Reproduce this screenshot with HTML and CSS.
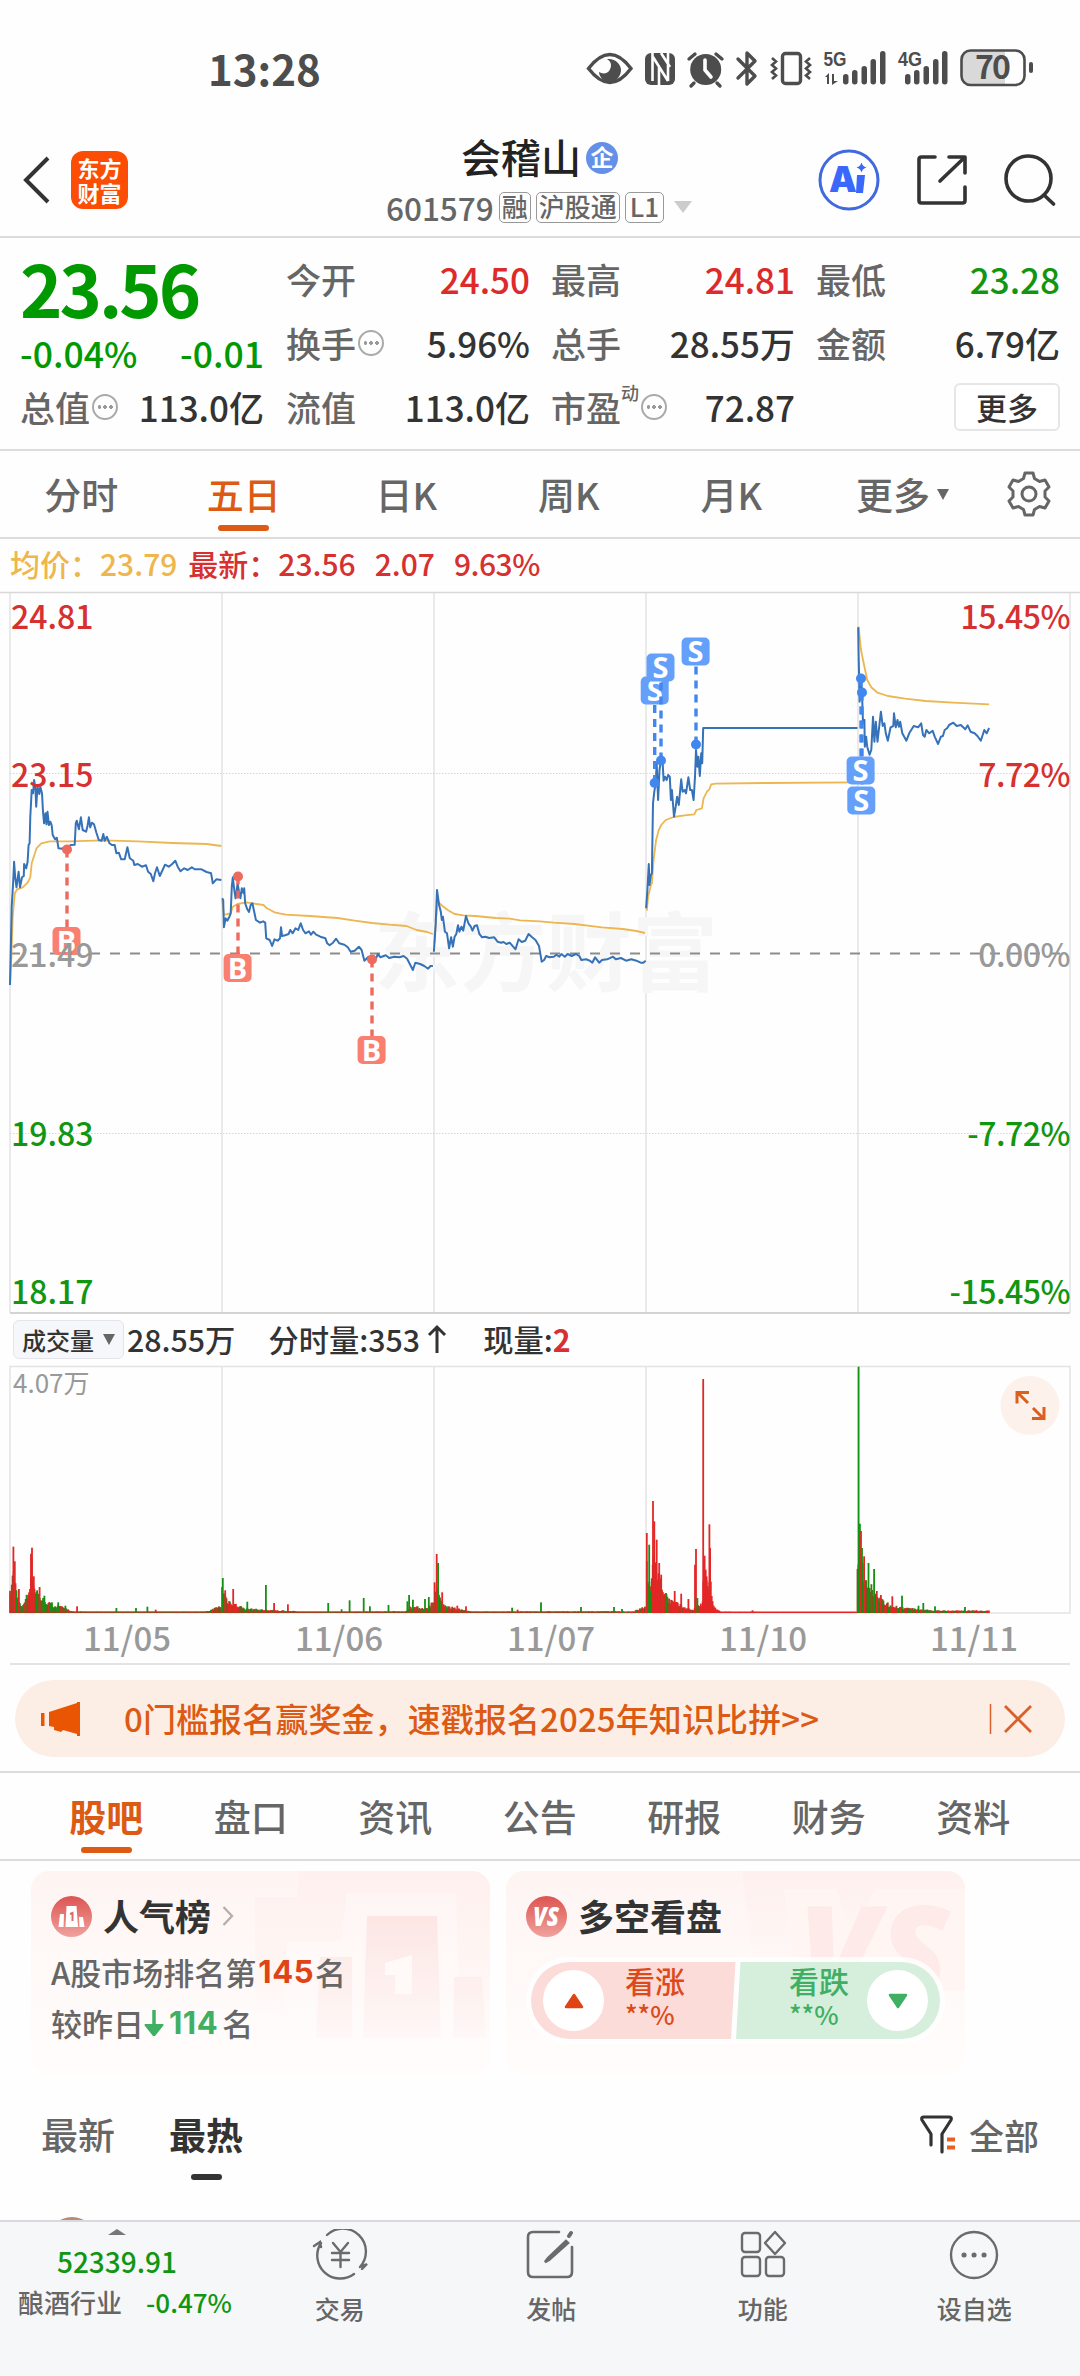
FILE: index.html
```html
<!DOCTYPE html>
<html lang="zh-CN">
<head>
    <meta charset="UTF-8">
    <meta name="viewport" content="width=device-width, initial-scale=1.0">
    <title>会稽山 601579</title>
    <link rel="stylesheet" href="styles.css">
</head>
<body>

<div class="page">
    <div class="status">
        <span class="clock">13:28</span>
        <svg class="status-icons" width="450" height="40" viewBox="585 50 450 40">
            <g fill="none" stroke="#4d4d4d" stroke-width="3.4">
                <path d="M588.500 69.500Q610 41.500 631 69.500Q610 97.500 588.500 69.500Z"/>
                <path d="M689 60l6-5M722 60l-6-5M694 84l-3 3M717 84l3 3" stroke-linecap="round"/>
                <path d="M738 60l17 17-8 8V54l8 8-17 17" stroke-linejoin="round" stroke-linecap="round"/>
                <rect x="782.500" y="54.500" width="18" height="30" rx="3"/>
                <path d="M772 59l4 3.500-4 3.500 4 3.500-4 3.500 4 3.500-4 3.500M810 59l-4 3.500 4 3.500-4 3.500 4 3.500-4 3.500 4 3.500" stroke-width="2.600"/>
            </g>
            <g fill="#4d4d4d">
                <path d="M607 60c8-1 14 5 14 11s-5 12-11 12-11-5-11-10c3 2 8 2 10-1 3-4 3-9-2-12z"/>
                <rect x="645" y="54" width="30" height="32" rx="6"/>
                <circle cx="705.700" cy="70.500" r="15.500"/>
                <rect x="843" y="75" width="5.500" height="10.500" rx="2.700"/>
                <rect x="852" y="71" width="5.500" height="14.500" rx="2.700"/>
                <rect x="861.500" y="67" width="5.500" height="18.500" rx="2.700"/>
                <rect x="870.500" y="60" width="5.500" height="25.500" rx="2.700"/>
                <rect x="880" y="52" width="5.500" height="33.500" rx="2.700"/>
                <rect x="905" y="75" width="5.500" height="10.500" rx="2.700"/>
                <rect x="914" y="71" width="5.500" height="14.500" rx="2.700"/>
                <rect x="923.500" y="67" width="5.500" height="18.500" rx="2.700"/>
                <rect x="933" y="60" width="5.500" height="25.500" rx="2.700"/>
                <rect x="942" y="52" width="5.500" height="33.500" rx="2.700"/>
                <path d="M825 78l4-4v11h-2v-7zM832 75h2v7h4l-6 4z"/>
                <text class="net" x="823.500" y="67" textLength="23" lengthAdjust="spacingAndGlyphs">5G</text>
                <text class="net" x="898" y="67" textLength="24" lengthAdjust="spacingAndGlyphs">4G</text>
                <rect x="1029" y="63" width="4" height="11" rx="2"/>
            </g>
            <path d="M652.500 54v28M653 58l15 24M659 67v19M661 54l9 14M668 54v28" fill="none" stroke="#fff" stroke-width="2.600"/>
            <path d="M705 61v10l6 7" fill="none" stroke="#fff" stroke-width="3.600" stroke-linecap="round"/>
            <path d="M970 51.500h35v34.500h-35a9 9 0 0 1-9-9v-16.500a9 9 0 0 1 9-9z" fill="#d9d9d9"/>
            <rect x="961.500" y="51.500" width="63" height="34.500" rx="9" fill="none" stroke="#4d4d4d" stroke-width="2.600"/>
            <text class="charge" x="975" y="80" textLength="36">70</text>
        </svg>
    </div>

    <div class="topbar">
        <svg class="back" width="30" height="50" viewBox="0 0 30 50"><path d="M26 3L4 25l22 22" fill="none" stroke="#333" stroke-width="4"/></svg>
        <div class="logo">东方<br>财富</div>
        <div class="stock">
            <div class="stock-name">会稽山<span class="ent">企</span></div>
            <div class="stock-code">601579<span class="tag">融</span><span class="tag">沪股通</span><span class="tag">L1</span><i class="tri"></i></div>
        </div>
        <div class="actions">
            <svg width="62" height="62" viewBox="0 0 62 62">
                <circle cx="31" cy="31" r="29" fill="none" stroke="#4069e0" stroke-width="3"/>
                <text class="ai" x="11" y="43">A</text>
                <path d="M39 26h8l-2 18h-7z" fill="#3a68fa"/>
                <path d="M43.500 13.500q1 4 5 5-4 1-5 5-1-4-5-5 4-1 5-5z" fill="#3a68fa"/>
            </svg>
            <svg width="50" height="50" viewBox="0 0 50 50" fill="none" stroke="#333" stroke-width="3.600" stroke-linecap="round" stroke-linejoin="round">
                <path d="M18 2H4.500Q2 2 2 4.500v41Q2 48 4.500 48h41q2.500 0 2.500-2.500V32M32 2h16v16M47 3L23 26"/>
            </svg>
            <svg width="52" height="52" viewBox="0 0 52 52" fill="none" stroke="#333" stroke-width="3.600" stroke-linecap="round">
                <circle cx="24.500" cy="24.500" r="22.500"/>
                <path d="M40 41l9.500 9"/>
            </svg>
        </div>
    </div>

    <div class="quote">
        <div class="quote-main">
            <div class="price">23.56</div>
            <div class="change"><span>-0.04%</span><span>-0.01</span></div>
            <div class="cell"><label>总值<i class="more-dot"></i></label><b>113.0亿</b></div>
        </div>
        <div class="quote-grid">
            <div class="cell"><label>今开</label><b class="up">24.50</b></div>
            <div class="cell"><label>最高</label><b class="up">24.81</b></div>
            <div class="cell"><label>最低</label><b class="down">23.28</b></div>
            <div class="cell"><label>换手<i class="more-dot"></i></label><b>5.96%</b></div>
            <div class="cell"><label>总手</label><b>28.55万</b></div>
            <div class="cell"><label>金额</label><b>6.79亿</b></div>
            <div class="cell"><label>流值</label><b>113.0亿</b></div>
            <div class="cell"><label>市盈<sup>动</sup><i class="more-dot"></i></label><b>72.87</b></div>
            <div class="cell end"><button class="more-btn">更多</button></div>
        </div>
    </div>

    <div class="tabs">
        <span>分时</span>
        <span class="on">五日</span>
        <span>日K</span>
        <span>周K</span>
        <span>月K</span>
        <span class="wide">更多<i class="tri-s"></i></span>
        <svg width="46" height="46" viewBox="0 0 46 46" fill="none" stroke="#666" stroke-width="3" stroke-linejoin="round">
            <path d="M19 2h8l1.500 5.500 5 3 5.500-1.500 4 7-4 4v6l4 4-4 7-5.500-1.500-5 3L27 44h-8l-1.500-5.500-5-3L7 37l-4-7 4-4v-6l-4-4 4-7 5.500 1.500 5-3z"/>
            <circle cx="23" cy="23" r="7"/>
        </svg>
    </div>

    <div class="legend">
        <span class="avg">均价：</span><span class="avg v1">23.79</span>
        <span>最新：</span><span class="v2">23.56</span><span class="v3">2.07</span><span class="v4">9.63%</span>
    </div>

    <svg class="chart" width="1080" height="724" viewBox="0 0 1080 724">
        <g stroke="#e3e3e3" stroke-width="1.500">
            <path d="M10 2.500V723M222 3V723M434 3V723M646 3V723M858 3V723M1070 2.500V723"/>
            <path d="M0 2.500H1080" stroke="#d8d8d8"/>
            <path d="M10 723H1070" stroke="#d4d4d4" stroke-width="2"/>
            <path d="M10 183.500H1070M10 543.500H1070" stroke="#d6d6d6" stroke-width="1" stroke-dasharray="1.500 1.500"/>
        </g>
        <text class="watermark" x="374" y="395">东方财富</text>
        <path d="M10 363.500H1070" stroke="#8c8c8c" stroke-width="2" stroke-dasharray="10 10"/>
        <g id="lines"></g>
        <g id="marks"></g>
        <g class="axis">
            <text class="t-up" x="11" y="39">24.81</text>
            <text class="t-up" x="11" y="197">23.15</text>
            <text class="t-flat" x="11" y="377">21.49</text>
            <text class="t-down" x="11" y="556">19.83</text>
            <text class="t-down" x="11" y="714">18.17</text>
        </g>
        <g class="axis right">
            <text class="t-up" x="1070" y="39">15.45%</text>
            <text class="t-up" x="1070" y="197">7.72%</text>
            <text class="t-flat" x="1070" y="377">0.00%</text>
            <text class="t-down" x="1070" y="556">-7.72%</text>
            <text class="t-down" x="1070" y="714">-15.45%</text>
        </g>
    </svg>

    <div class="vol-head">
        <span class="vol-select">成交量<i class="tri-s"></i></span>
        <span class="n1">28.55万</span>
        <span class="n2">分时量:353<svg width="20" height="30" viewBox="0 0 20 30"><path d="M10 29V3M2 11l8-8 8 8" fill="none" stroke="#333" stroke-width="3"/></svg></span>
        <span>现量:<em>2</em></span>
    </div>

    <svg class="chart" width="1080" height="306" viewBox="0 0 1080 306">
        <g stroke="#e3e3e3" stroke-width="1.500">
            <path d="M10 2.500H1070V249H10ZM222 3V249M434 3V249M646 3V249M858 3V249" fill="none"/>
            <path d="M10 300H1070" stroke-width="2"/>
        </g>
        <g id="volume"></g>
        <text class="vol-max" x="13" y="29">4.07万</text>
        <g class="dates">
            <text x="127" y="287">11/05</text>
            <text x="339" y="287">11/06</text>
            <text x="551" y="287">11/07</text>
            <text x="763" y="287">11/10</text>
            <text x="974" y="287">11/11</text>
        </g>
        <circle cx="1030" cy="41.500" r="29.500" fill="#fdf1eb"/>
        <path d="M1017 39.500V28.500h12M1018 29l10 10M1044 43v11.500h-12M1043 54l-10-10" fill="none" stroke="#dc5f1c" stroke-width="3"/>
    </svg>

    <div class="banner">
        <svg width="40" height="34" viewBox="0 0 40 34" fill="#ea5504"><path d="M0 11h3.500v13H0zM8 10L36 1V0h3v34h-3v-2l-14-4-2 2-7-2v-3l-5-1z"/></svg>
        <p>0门槛报名赢奖金，速戳报名2025年知识比拼&gt;&gt;</p>
        <svg class="close" width="44" height="32" viewBox="0 0 44 32" fill="none" stroke="#d9602a"><path d="M1.500 1v30" stroke-width="1.500"/><path d="M16 3l26 26M42 3L16 29" stroke-width="2.800"/></svg>
    </div>

    <div class="tabs tabs2">
        <span class="on">股吧</span>
        <span>盘口</span>
        <span>资讯</span>
        <span>公告</span>
        <span>研报</span>
        <span>财务</span>
        <span>资料</span>
    </div>

    <div class="cards">
        <div class="card">
            <svg class="card-bg" width="459" height="204" viewBox="0 0 459 204">
                <defs>
                    <linearGradient id="fade" x1="0" y1="0" x2="0" y2="1"><stop offset="0" stop-color="#fce6e4"/><stop offset="1" stop-color="#fef8f6"/></linearGradient>
                    <linearGradient id="pale" x1="0" y1="0" x2="0" y2="1"><stop offset="0" stop-color="#fef0ee"/><stop offset="1" stop-color="#fffaf8"/></linearGradient>
                    <linearGradient id="ball" x1="0" y1="0" x2="0" y2="1"><stop offset="0" stop-color="#dc5450"/><stop offset="1" stop-color="#f0a29e"/></linearGradient>
                </defs>
                <path d="M268 0H459V160H429L425 22H315L311 70H256L252 140H224V26H266Z" fill="url(#pale)"/>
                <path d="M289 86h32v81h-36zM336 45h70l4 122h-78zM423 106h28l4 61h-33z" fill="url(#fade)"/>
                <path d="M354 92l27-8v39h-17v-19h-10z" fill="#fffaf8"/>
            </svg>
            <h3>
                <svg width="41" height="41" viewBox="0 0 41 41"><circle cx="20.500" cy="20.500" r="20.500" fill="url(#ball)"/><path d="M9 18h4l-.5 13H7.500zM15.500 10h10l1.500 21H14.500zM28 21h4l1.500 10H28.500z" fill="#fff"/><path d="M19 18l2.500-1v8" fill="none" stroke="#dc6a66" stroke-width="2"/></svg>
                <span>人气榜</span>
                <svg class="arrow" width="12" height="20" viewBox="0 0 12 20"><path d="M1.500 1l8.500 9-8.500 9" fill="none" stroke="#b5b0b0" stroke-width="2.400"/></svg>
            </h3>
            <p>A股市场排名第<b class="hot">145</b>名</p>
            <p>较昨日<svg class="fall" width="20" height="28" viewBox="0 0 20 28"><path d="M10 1v18" stroke="#3faf63" stroke-width="3.500"/><path d="M1 15h18q1 1 0 2l-8 10h-2L1 17q-1-1 0-2z" fill="#3faf63"/></svg><b class="cool">114</b>名</p>
        </div>
        <div class="card">
            <svg class="card-bg" width="459" height="204" viewBox="0 0 459 204">
                <path d="M236 0H459V110H250Z" fill="url(#pale)"/>
                <path d="M278 18H330L345 60 370 18H459V120H290Z" fill="#fff6f3"/>
                <text class="vs-big" x="292" y="128">VS</text>
            </svg>
            <h3>
                <svg width="41" height="41" viewBox="0 0 41 41"><circle cx="20.500" cy="20.500" r="20.500" fill="url(#ball)"/><text class="vs" x="7" y="30" textLength="26" lengthAdjust="spacingAndGlyphs">VS</text></svg>
                <span>多空看盘</span>
            </h3>
            <div class="vote">
                <svg class="vote-bg" width="419" height="87" viewBox="0 0 419 87">
                    <rect width="419" height="87" rx="43.500" fill="#fff" opacity=".8"/>
                    <path d="M43.500 5H209.500L205 82H43.500a38.500 38.500 0 0 1 0-77z" fill="#fcdcd9"/>
                    <path d="M214.500 5H375.500a38.500 38.500 0 0 1 0 77H210z" fill="#d6eedc"/>
                </svg>
                <i class="knob"><svg width="20" height="16" viewBox="0 0 20 16"><path d="M10 2l8 12H2z" fill="#e04314" stroke="#e04314" stroke-width="2.500" stroke-linejoin="round"/></svg></i>
                <div class="side rise">看涨<small>**%</small></div>
                <div class="side drop">看跌<small>**%</small></div>
                <i class="knob"><svg width="20" height="16" viewBox="0 0 20 16"><path d="M10 14l8-12H2z" fill="#3faf63" stroke="#3faf63" stroke-width="2.500" stroke-linejoin="round"/></svg></i>
            </div>
        </div>
    </div>

    <div class="sort">
        <span>最新</span>
        <span class="on">最热</span>
        <div class="filter">
            <svg width="38" height="40" viewBox="0 0 38 40" fill="none" stroke="#333" stroke-width="3.200" stroke-linecap="round" stroke-linejoin="round">
                <path d="M11 30V19L2 5q-1-3 2-3h25q3 0 2 3l-9 14v18"/>
                <path d="M27 24.500h8M27 32.500h8" stroke="#ea6020" stroke-width="4" stroke-linecap="butt"/>
            </svg>
            全部
        </div>
    </div>
    <div class="feed"><i class="avatar"></i></div>

    <div class="dock">
        <div class="index">
            <i class="tri-up"></i>
            <b>52339.91</b>
            <div>酿酒行业<em>-0.47%</em></div>
        </div>
        <div class="item">
            <svg width="56" height="52" viewBox="0 0 56 52" fill="none" stroke="#6b6b6b" stroke-width="2.400" stroke-linecap="round">
                <path d="M15 6a23 23 0 0 1 33 32M42 45A23 23 0 0 1 9 14M2 17l6-4 1 5M48 38l7-3-5 5"/>
                <path d="M21 14l7.500 9 7.500-9M28.500 23v15M20 24h17M20 31h17"/>
            </svg>
            交易
        </div>
        <div class="item">
            <svg width="56" height="52" viewBox="0 0 56 52" fill="none" stroke="#6b6b6b" stroke-width="2.600" stroke-linecap="round">
                <path d="M36 3H10Q5 3 5 8v35q0 5 5 5h34q5 0 5-5V18"/>
                <path d="M43 12L25 29l-3 4 4-2 19-17z" fill="#6b6b6b"/>
                <path d="M46 7l2-3" stroke-width="4"/>
            </svg>
            发帖
        </div>
        <div class="item">
            <svg width="56" height="52" viewBox="0 0 56 52" fill="none" stroke="#6b6b6b" stroke-width="2.400" stroke-linejoin="round">
                <rect x="7" y="4" width="18" height="19" rx="3"/>
                <rect x="7" y="28" width="18" height="19" rx="3"/>
                <rect x="31" y="28" width="18" height="19" rx="3"/>
                <path d="M40 3l10 11-10 11-10-11z"/>
            </svg>
            功能
        </div>
        <div class="item">
            <svg width="56" height="52" viewBox="0 0 56 52" fill="none" stroke="#6b6b6b" stroke-width="2.400">
                <circle cx="28" cy="26" r="23"/>
                <path d="M18 26h.1M28 26h.1M38 26h.1" stroke-width="5" stroke-linecap="round"/>
            </svg>
            设自选
        </div>
    </div>
</div>

<script src="chart.js"></script>
</body>
</html>
```
FILE: styles.css
```css
body {
    margin: 0;
    background: #fefefe;
    color: #333;
    font-family: "Noto Sans CJK SC", sans-serif;
    font-weight: 500;
}
.page {
    width: 1080px;
    height: 2376px;
    overflow: hidden;
    display: flex;
    flex-direction: column;
}
.page > * {
    flex: none;
    box-sizing: border-box;
}
svg {
    flex: none;
    display: block;
}
i, em {
    font-style: normal;
}
p, h3 {
    margin: 0;
}

/* status bar */
.status {
    height: 100px;
    padding: 38px 45px 0 208px;
    display: flex;
    justify-content: space-between;
    align-items: center;
    color: #4d4d4d;
}
.clock {
    font-size: 42px;
    font-weight: 700;
    line-height: 62px;
    margin-top: -2px;
}
.net {
    font-family: "Liberation Sans", sans-serif;
    font-size: 20px;
    font-weight: 700;
}
.charge {
    font-size: 32px;
    font-weight: 700;
    fill: #4d4d4d;
}

/* title bar */
.topbar {
    height: 138px;
    padding: 0 24px 0 22px;
    border-bottom: 2px solid #dcdcdc;
    display: flex;
    align-items: center;
}
.back {
    margin: 24px 19px 0 0;
}
.logo {
    width: 57px;
    height: 58px;
    margin-top: 24px;
    padding-top: 4px;
    box-sizing: border-box;
    border-radius: 12px;
    background: #fd4d05;
    color: #fff;
    font-size: 22px;
    line-height: 25px;
    font-weight: 700;
    text-align: center;
}
.stock {
    margin: 24px auto 0 258px;
}
.stock-name {
    display: flex;
    align-items: center;
    margin-left: 75px;
    font-size: 40px;
    line-height: 54px;
    color: #222;
}
.ent {
    width: 32px;
    height: 32px;
    margin: 3px 0 0 5px;
    border-radius: 50%;
    background: #6490e8;
    color: #fff;
    font-size: 23px;
    line-height: 29px;
    font-weight: 700;
    text-align: center;
}
.stock-code {
    display: flex;
    align-items: center;
    height: 48px;
    font-size: 31.500px;
    line-height: 46px;
    color: #666;
}
.tag {
    height: 31px;
    margin-left: 5px;
    padding: 0 2px;
    box-sizing: border-box;
    border: 1.5px solid #999;
    border-radius: 5px;
    font-size: 26px;
    line-height: 25px;
}
.tag:last-of-type {
    padding: 0 4px;
}
.tri {
    margin-left: 10px;
    border: 9px solid transparent;
    border-top: 12px solid #ccc;
    border-bottom: 0;
}
.actions {
    display: flex;
    align-items: center;
    gap: 37px;
    margin-top: 24px;
}
.ai {
    font-family: Inter, sans-serif;
    font-size: 35px;
    font-weight: 900;
    fill: #3a68fa;
}

/* quote */
.quote {
    height: 213px;
    padding: 9px 19px 0 20px;
    border-bottom: 2px solid #dcdcdc;
    display: flex;
}
.quote-main {
    width: 244px;
    margin-right: 22px;
    color: #009900;
}
.price {
    height: 84px;
    font-size: 72px;
    line-height: 79px;
    font-weight: 700;
    letter-spacing: -3px;
}
.change {
    height: 44px;
    display: flex;
    justify-content: space-between;
    font-size: 35.500px;
    line-height: 43px;
}
.quote-grid {
    flex: 1;
    display: grid;
    grid-template-columns: 244px 244px 244px;
    column-gap: 21px;
    grid-auto-rows: 64px;
    align-content: start;
}
.cell {
    height: 64px;
    display: flex;
    justify-content: space-between;
    align-items: center;
    font-size: 35px;
    line-height: 60px;
    color: #333;
}
.cell label {
    display: flex;
    align-items: center;
    color: #666;
}
.cell b {
    font-weight: 500;
}
.cell sup {
    font-size: 18px;
    line-height: 18px;
    margin-bottom: 30px;
}
.cell .up {
    color: #dd2a2a;
}
.cell .down {
    color: #109610;
}
.cell.end {
    justify-content: flex-end;
}
.more-dot {
    width: 26px;
    height: 26px;
    margin-left: 2px;
    box-sizing: border-box;
    border: 2px solid #aaa;
    border-radius: 50%;
    background:
        radial-gradient(circle, #999 1.6px, transparent 2px) -5.5px 0 / 22px 22px no-repeat,
        radial-gradient(circle, #999 1.6px, transparent 2px) 0 0 / 22px 22px no-repeat,
        radial-gradient(circle, #999 1.6px, transparent 2px) 5.5px 0 / 22px 22px no-repeat;
}
.more-btn {
    width: 106px;
    height: 48px;
    padding: 0;
    border: 2px solid #e6e6e6;
    border-radius: 6px;
    background: #fff;
    font: inherit;
    font-size: 31px;
    line-height: 40px;
    color: #333;
}

/* tab rows */
.tabs {
    height: 88px;
    border-bottom: 2px solid #dcdcdc;
    display: flex;
    align-items: center;
    font-size: 37px;
    line-height: 86px;
    color: #666;
}
.tabs span {
    width: 162.500px;
    text-align: center;
    position: relative;
}
.tabs .wide {
    width: 180px;
    margin-right: 13px;
    display: flex;
    justify-content: center;
    align-items: center;
    gap: 7px;
}
.tabs .on {
    color: #dc5a14;
}
.tabs .on::after {
    content: "";
    position: absolute;
    left: 50%;
    bottom: 6px;
    width: 51px;
    height: 6px;
    margin-left: -25.500px;
    border-radius: 3px;
    background: #dc5a14;
}
.tri-s {
    border: 6.500px solid transparent;
    border-top: 11px solid #666;
    border-bottom: 0;
}
.tabs2 {
    padding: 0 34px;
}
.tabs2 span {
    width: 144.500px;
}
.tabs2 .on {
    font-weight: 700;
}

.legend {
    height: 51px;
    padding-left: 10px;
    display: flex;
    font-size: 30px;
    line-height: 49px;
    color: #d63030;
}
.legend .avg {
    color: #efb64b;
}
.legend .v1 { margin-right: 11px; }
.legend .v2 { margin-right: 19px; }
.legend .v3 { margin-right: 19px; }
.legend .v4 { letter-spacing: -0.500px; }

/* charts */
.watermark {
    font-size: 86px;
    font-weight: 700;
    fill: #f6f6f6;
}
.axis text {
    font-size: 32px;
}
.right text {
    text-anchor: end;
    letter-spacing: -0.500px;
}
.t-up { fill: #d63030; }
.t-down { fill: #109610; }
.t-flat { fill: #999; }
.mark {
    font-family: "Open Sans", sans-serif;
    font-size: 29px;
    font-weight: 700;
    fill: #fff;
    text-anchor: middle;
}
.vol-head {
    height: 50px;
    padding-left: 13px;
    display: flex;
    align-items: center;
    font-size: 30.300px;
    line-height: 47px;
}
.vol-select {
    width: 111px;
    height: 39px;
    margin-right: 3px;
    box-sizing: border-box;
    border: 1px solid #e4e5ea;
    border-radius: 6px;
    background: #f6f7fa;
    display: flex;
    justify-content: center;
    align-items: center;
    gap: 9px;
    font-size: 24px;
    line-height: 35px;
}
.vol-head .n1 {
    margin-right: 33px;
}
.vol-head .n2 {
    display: flex;
    align-items: center;
    gap: 7px;
    margin-right: 36px;
}
.vol-head em {
    font-weight: 700;
    color: #d63030;
}
.vol-max {
    font-size: 26px;
    font-weight: 400;
    fill: #999;
}
.dates text {
    font-size: 33px;
    fill: #999;
    text-anchor: middle;
}

.banner {
    height: 77px;
    margin: 10px 15px 14px;
    padding: 0 32px 0 26px;
    border-radius: 39px;
    background: #fceee5;
    display: flex;
    align-items: center;
    font-size: 33px;
    line-height: 71px;
    letter-spacing: 0.100px;
    color: #dc5a14;
}
.banner p {
    margin-left: 17px;
    padding-left: 26px;
    flex: 1;
    white-space: nowrap;
}
.page > .tabs2 {
    height: 90px;
    border-top: 2px solid #dcdcdc;
}

/* cards */
.cards {
    height: 214px;
    padding: 10px 0 0 31px;
    display: flex;
    gap: 16px;
}
.card {
    position: relative;
    width: 459px;
    height: 204px;
    padding: 20px;
    box-sizing: border-box;
    border-radius: 18px;
    overflow: hidden;
    background: linear-gradient(#fef5f3, #fffdfc);
    font-size: 31px;
    line-height: 51px;
    color: #666;
}
.card > * {
    position: relative;
}
.card .card-bg {
    position: absolute;
    left: 0;
    top: 0;
}
.card h3 {
    height: 52px;
    display: flex;
    align-items: center;
    gap: 11px;
    margin-top: -1px;
    font-size: 36px;
    line-height: 48px;
    color: #333;
}
.card h3 span {
    margin-top: -3px;
}
.card p {
    display: flex;
    align-items: center;
}
.card h3 + p {
    margin-top: 4px;
}
.card p b {
    font-family: Inter, "Noto Sans CJK SC", sans-serif;
    letter-spacing: 0.500px;
}
.card .hot {
    margin: 0 1px 0 2px;
    color: #e04314;
}
.card .cool {
    margin: 0 4px 0 5px;
    color: #3faf63;
}
.vs, .vs-big {
    font-family: "Open Sans", sans-serif;
    font-size: 26px;
    font-weight: 800;
    font-style: italic;
    fill: #fff;
}
.vs-big {
    font-size: 130px;
    fill: #fdeae9;
}
.vote {
    width: 419px;
    height: 87px;
    margin-top: 15px;
    padding: 13px 0 13px 17px;
    box-sizing: border-box;
    display: flex;
    align-items: flex-start;
}
.vote .vote-bg {
    position: absolute;
    left: 0;
    top: 0;
}
.knob {
    position: relative;
    width: 61px;
    height: 61px;
    border-radius: 50%;
    background: #fff;
    display: flex;
    align-items: center;
    justify-content: center;
}
.side {
    position: relative;
    width: 61px;
    margin: -9px 0 0 21px;
    font-size: 30px;
    line-height: 38px;
}
.side small {
    display: block;
    font-size: 26px;
    line-height: 30px;
}
.rise {
    color: #dc4a1c;
}
.drop {
    margin: -9px 17px 0 103px;
    color: #3faf63;
}

/* feed */
.sort {
    height: 124px;
    padding: 0 41px;
    display: flex;
    font-size: 37px;
    line-height: 118px;
    color: #666;
}
.sort .on {
    position: relative;
    margin-left: 54px;
    font-weight: 700;
    color: #333;
}
.sort .on::after {
    content: "";
    position: absolute;
    left: 22px;
    top: 99px;
    width: 31px;
    height: 6px;
    border-radius: 3px;
    background: #333;
}
.filter {
    display: flex;
    align-items: center;
    gap: 11px;
    margin-left: auto;
    height: 120px;
    font-size: 35px;
}
.feed {
    height: 21px;
    padding: 18px 0 0 47px;
    overflow: hidden;
}
.avatar {
    display: block;
    width: 50px;
    height: 50px;
    border-radius: 50%;
    background: #b98a76;
}

/* bottom bar */
.dock {
    height: 156px;
    border-top: 2px solid #d9dadd;
    background: #f6f7f9;
    display: flex;
    font-size: 25px;
    line-height: 38px;
    color: #666;
}
.index {
    width: 234px;
    display: flex;
    flex-direction: column;
    align-items: center;
}
.tri-up {
    margin-top: 7px;
    border: 9px solid transparent;
    border-bottom: 6px solid #777;
    border-top: 0;
}
.index b {
    margin-top: 6px;
    font-size: 28px;
    line-height: 41px;
    font-weight: 500;
    color: #109610;
}
.index div {
    font-size: 26px;
    line-height: 40px;
    white-space: nowrap;
    margin-left: 16px;
}
.index em {
    margin-left: 24px;
    color: #109610;
}
.item {
    width: 211.500px;
    padding-top: 7px;
    display: flex;
    flex-direction: column;
    align-items: center;
    gap: 8px;
}
```
FILE: chart.js
```js
const NS = 'http://www.w3.org/2000/svg';
const SX = 1080 / 3136; // plot units to px
const SY = 1 / 3;

function add(parent, tag, attrs, text) {
    const el = document.createElementNS(NS, tag);
    for (const k in attrs) el.setAttribute(k, attrs[k]);
    if (text) el.textContent = text;
    parent.appendChild(el);
}

const avg = [
    '29,1185 33,1100 37,980 43,910 50,898 66,892 80,878 88,862 92,820 98,800 106,775 120,760 145,754 200,754 300,751 400,754 500,759 600,762 643,768',
    '645,930 650,975 660,972 670,970 676,950 690,942 715,937 745,942 765,945 775,955 800,968 830,974 900,978 980,984 1030,992 1080,999 1130,1004 1180,1008 1210,1020 1240,1026 1257,1032',
    '1262,1060 1266,990 1271,935 1285,948 1300,960 1320,972 1345,976 1380,978 1440,984 1480,986 1510,991 1568,994 1608,998 1668,1002 1748,1012 1808,1017 1848,1023 1873,1029',
    '1878,962 1882,920 1890,885 1893,880 1898,810 1905,750 1913,720 1920,705 1933,690 1956,681 1988,676 2016,673 2022,660 2038,655 2043,625 2053,605 2060,598 2065,583 2078,581 2218,579 2490,577',
    '2493,110 2500,180 2508,220 2518,270 2530,292 2548,308 2578,318 2628,326 2688,333 2768,338 2872,343'
];
const price = [
    '29,1185 34,950 38,880 41,815 44,862 48,892 54,845 58,892 64,862 69,858 70,822 76,835 80,815 83,765 86,760 88,680 92,600 96,610 99,570 103,600 105,650 109,590 114,612 117,590 122,610 125,665 128,700 132,670 135,703 138,665 142,705 146,695 150,706 153,735 160,748 165,743 170,775 180,776 190,770 195,778 205,765 217,764 220,700 223,692 229,718 235,682 240,720 250,725 254,708 258,682 262,712 267,698 273,703 280,728 287,750 295,752 300,732 304,752 310,740 318,760 325,765 333,765 338,790 345,788 352,808 362,808 370,772 377,805 387,812 390,825 400,822 412,830 424,826 430,845 438,852 445,874 450,850 456,832 464,858 472,840 479,824 490,830 500,822 509,812 516,830 524,844 535,835 545,840 557,832 565,838 585,838 600,846 613,850 618,880 628,868 643,870',
    '645,925 648,930 650,1012 655,985 660,992 666,980 670,970 673,890 676,862 681,905 684,925 690,880 694,905 698,925 702,895 707,910 709,895 712,940 718,958 723,966 728,945 733,940 738,965 743,990 755,998 764,994 770,998 773,1045 783,1050 790,1068 797,1048 806,1052 813,1045 816,1012 819,1038 828,1036 838,1032 843,1020 850,1030 858,1015 866,1020 873,1000 880,1020 887,1030 897,1024 903,1034 910,1025 918,1034 930,1040 945,1045 950,1060 957,1066 967,1058 976,1046 985,1060 1000,1064 1010,1072 1018,1085 1030,1082 1042,1070 1050,1080 1058,1112 1070,1100 1080,1105 1092,1105 1097,1092 1105,1102 1120,1096 1130,1104 1145,1100 1160,1102 1172,1098 1182,1106 1190,1122 1199,1140 1206,1118 1220,1122 1232,1128 1243,1136 1250,1128 1257,1128',
    '1260,1085 1265,1000 1269,900 1275,945 1280,965 1283,990 1286,980 1292,1025 1298,1030 1304,1075 1310,1042 1315,1070 1320,1040 1325,1032 1330,1006 1334,1025 1340,1010 1345,1022 1353,978 1360,1000 1367,1010 1372,1022 1378,1008 1385,1006 1392,1032 1400,1042 1410,1040 1420,1044 1435,1042 1445,1055 1455,1058 1462,1056 1470,1062 1480,1058 1497,1078 1506,1048 1515,1056 1525,1052 1535,1032 1545,1042 1555,1050 1565,1068 1573,1115 1580,1110 1586,1098 1596,1102 1608,1100 1616,1094 1624,1100 1630,1092 1640,1100 1648,1092 1660,1098 1672,1092 1682,1098 1688,1110 1702,1108 1713,1112 1720,1118 1728,1102 1740,1118 1748,1110 1763,1108 1780,1100 1788,1108 1803,1104 1818,1112 1833,1108 1848,1112 1860,1118 1868,1118 1875,1112',
    '1876,955 1880,900 1884,822 1886,885 1890,855 1893,850 1896,640 1900,605 1904,580 1907,520 1911,630 1915,540 1919,512 1924,515 1927,572 1931,560 1936,570 1940,555 1945,560 1948,630 1951,600 1957,680 1962,650 1966,620 1971,645 1978,568 1982,605 1988,600 1992,610 1999,562 2004,600 2009,600 2014,630 2018,560 2021,480 2025,530 2028,500 2032,558 2036,490 2039,520 2042,414 2490,414',
    '2492,112 2493,190 2496,335 2500,265 2503,308 2506,400 2510,390 2511,470 2515,440 2518,470 2525,494 2530,480 2535,380 2539,455 2543,395 2548,455 2553,410 2558,365 2563,408 2568,400 2572,430 2578,452 2586,412 2594,408 2596,370 2601,412 2606,390 2610,410 2614,395 2620,430 2632,452 2640,430 2653,408 2666,412 2675,400 2680,435 2685,440 2690,420 2698,430 2708,422 2714,440 2724,462 2732,440 2738,438 2743,420 2750,415 2756,405 2768,398 2778,408 2790,405 2803,418 2810,406 2818,425 2830,430 2838,438 2848,452 2858,420 2865,430 2872,414'
];

function plot(points, color, width) {
    const pts = points.split(' ').map(p => {
        const [x, y] = p.split(',');
        return (x * SX).toFixed(1) + ',' + (y * SY).toFixed(1);
    }).join(' ');
    add(document.getElementById('lines'), 'polyline', {
        points: pts, fill: 'none', stroke: color, 'stroke-width': width, 'stroke-linejoin': 'round'
    });
}
avg.forEach(p => plot(p, '#ecb650', 1.8));
price.forEach(p => plot(p, '#3672b8', 2));

// trade marks: letter, dot x, dot y, badge x, badge y
const marks = [
    ['B', 67, 259.5, 66.5, 351],
    ['B', 238, 286.5, 237.6, 378],
    ['B', 372, 369.5, 371.6, 460],
    ['S', 654.7, 193, 654.7, 100.5],
    ['S', 661, 170.5, 660.5, 77.5],
    ['S', 696, 154.5, 695.6, 61.5],
    ['S', 862, 102.5, 861.3, 210.5],
    ['S', 861, 88.5, 860.6, 180.5]
];
const markLayer = document.getElementById('marks');
marks.forEach(([t, x, y, bx, by]) => {
    const line = t === 'B' ? '#ee6a5c' : '#4287ee';
    add(markLayer, 'line', {x1: x, y1: y, x2: x, y2: by, stroke: line, 'stroke-width': 3.4, 'stroke-dasharray': '8 6'});
    add(markLayer, 'circle', {cx: x, cy: y, r: 5, fill: line});
    add(markLayer, 'rect', {x: bx - 14, y: by - 14, width: 28, height: 28, rx: 5, fill: t === 'B' ? '#f97f70' : '#64a0fa'});
    add(markLayer, 'text', {x: bx, y: by + 10.5, class: 'mark'}, t);
});

// volume: envelope of [x, height] per day, then the single spikes
const RED = '#e32626';
const GREEN = '#149014';
const BOTH = '#8a4a1c';
const envelope = [
    [[29, 60], [40, 130], [50, 50], [62, 18], [72, 40], [82, 60], [92, 150], [100, 80], [120, 45], [150, 25], [190, 15], [205, 5], [280, 3], [600, 4], [618, 12], [642, 22]],
    [[645, 75], [660, 40], [680, 28], [710, 14], [760, 10], [850, 6], [870, 3], [1180, 5], [1190, 20], [1240, 14], [1258, 35]],
    [[1262, 90], [1275, 50], [1290, 22], [1340, 10], [1370, 4], [1840, 5], [1860, 14], [1874, 20]],
    [[1878, 150], [1890, 60], [1898, 200], [1912, 110], [1925, 70], [1945, 40], [1990, 16], [2012, 10], [2040, 30], [2044, 160], [2052, 100], [2064, 90], [2072, 18], [2092, 4], [2488, 3]],
    [[2490, 190], [2500, 170], [2510, 120], [2520, 100], [2540, 65], [2560, 38], [2590, 22], [2640, 14], [2700, 8], [2872, 7]]
];
const spikes = [
    [39, 199, RED], [43, 155, RED], [48, 68, GREEN], [55, 72, RED], [90, 178, RED], [93, 196, RED], [98, 110, RED], [108, 68, GREEN], [115, 78, RED], [129, 52, GREEN], [151, 32, GREEN], [169, 32, GREEN], [190, 22, GREEN], [224, 20, RED], [338, 15, GREEN], [395, 15, GREEN], [428, 19, GREEN], [452, 10, RED],
    [647, 105, GREEN], [654, 68, RED], [677, 72, RED], [718, 34, GREEN], [772, 84, GREEN], [796, 30, RED], [836, 26, RED], [953, 30, GREEN], [992, 11, GREEN], [1015, 38, GREEN], [1056, 45, GREEN], [1074, 20, GREEN], [1128, 24, GREEN], [1183, 35, GREEN], [1188, 54, GREEN], [1199, 40, GREEN], [1234, 42, GREEN], [1245, 48, GREEN],
    [1268, 177, RED], [1272, 150, GREEN], [1284, 62, RED], [1328, 22, RED], [1353, 20, RED], [1487, 16, GREEN], [1503, 10, RED], [1571, 32, GREEN], [1687, 18, GREEN], [1783, 18, GREEN], [1806, 12, GREEN],
    [1878, 240, RED], [1885, 205, GREEN], [1896, 336, RED], [1900, 275, RED], [1907, 220, RED], [1914, 150, RED], [1920, 115, RED], [1934, 60, GREEN], [1959, 66, RED], [1978, 58, RED], [1999, 42, RED], [2018, 145, RED], [2021, 192, RED], [2025, 45, GREEN], [2042, 702, RED], [2046, 172, RED], [2060, 266, RED], [2062, 195, RED], [2185, 8, RED],
    [2493, 739, GREEN], [2497, 268, GREEN], [2500, 246, RED], [2503, 195, GREEN], [2509, 170, RED], [2522, 150, GREEN], [2538, 132, GREEN], [2546, 66, RED], [2558, 54, RED], [2591, 50, RED], [2619, 52, GREEN], [2667, 22, GREEN], [2681, 30, GREEN], [2715, 20, GREEN], [2802, 18, GREEN]
];

const vol = document.getElementById('volume');
const BASE = 249;

function bar(x, h, color) {
    add(vol, 'rect', {x: (x * SX - 0.9).toFixed(1), y: (BASE - h * SY).toFixed(1), width: 1.8, height: (h * SY).toFixed(1), fill: color});
}

let seed = 7;
function rnd() {
    seed = (seed * 16807) % 2147483647;
    return seed / 2147483647;
}

envelope.forEach((env, day) => {
    for (let i = 0; i < env.length - 1; i++) {
        const [x0, h0] = env[i];
        const [x1, h1] = env[i + 1];
        for (let x = x0; x < x1; x += 2.56) {
            const h = h0 + (h1 - h0) * (x - x0) / (x1 - x0);
            const r = rnd();
            let color = r < 0.45 ? RED : r < 0.7 ? BOTH : GREEN;
            if (day === 3 && x > 1895) color = x > 2030 || r < 0.7 ? RED : BOTH;
            if (day === 4 && x < 2560) color = r < 0.5 ? BOTH : r < 0.6 ? RED : '#3f7a14';
            bar(x, Math.max(4, h * (0.65 + rnd() * 0.5)), color);
        }
    }
});
spikes.forEach(s => bar(...s));
add(vol, 'rect', {x: 10, y: BASE - 1.5, width: 608, height: 1.5, fill: '#a0401c', opacity: 0.7});
```
